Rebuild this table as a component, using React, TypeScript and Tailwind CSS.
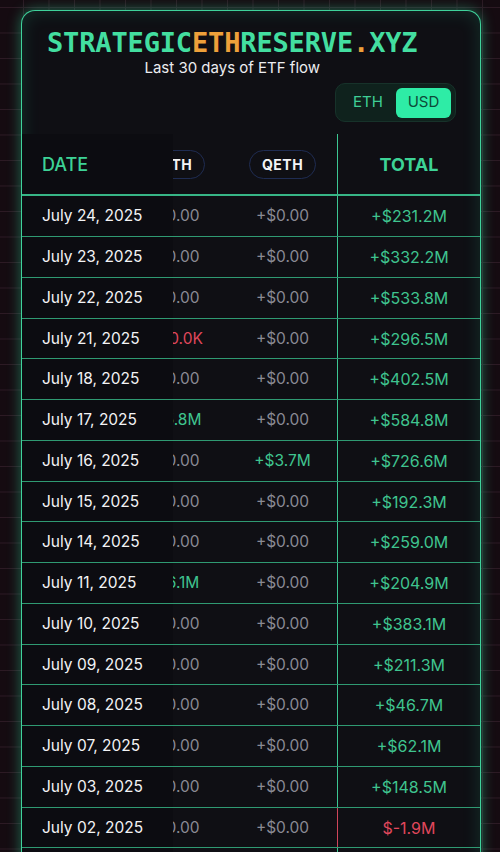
import React from "react";

type Tone = "g" | "r" | "n";
type Row = { date: string; c2: string; c2t: Tone; c3: string; c3t: Tone; total: string; tt: "g" | "r" };

const rows: Row[] = [
  { date: "July 24, 2025", c2: "+$0.00", c2t: "n", c3: "+$0.00", c3t: "n", total: "+$231.2M", tt: "g" },
  { date: "July 23, 2025", c2: "+$0.00", c2t: "n", c3: "+$0.00", c3t: "n", total: "+$332.2M", tt: "g" },
  { date: "July 22, 2025", c2: "+$0.00", c2t: "n", c3: "+$0.00", c3t: "n", total: "+$533.8M", tt: "g" },
  { date: "July 21, 2025", c2: "$-20.0K", c2t: "r", c3: "+$0.00", c3t: "n", total: "+$296.5M", tt: "g" },
  { date: "July 18, 2025", c2: "+$0.00", c2t: "n", c3: "+$0.00", c3t: "n", total: "+$402.5M", tt: "g" },
  { date: "July 17, 2025", c2: "+$5.8M", c2t: "g", c3: "+$0.00", c3t: "n", total: "+$584.8M", tt: "g" },
  { date: "July 16, 2025", c2: "+$0.00", c2t: "n", c3: "+$3.7M", c3t: "g", total: "+$726.6M", tt: "g" },
  { date: "July 15, 2025", c2: "+$0.00", c2t: "n", c3: "+$0.00", c3t: "n", total: "+$192.3M", tt: "g" },
  { date: "July 14, 2025", c2: "+$0.00", c2t: "n", c3: "+$0.00", c3t: "n", total: "+$259.0M", tt: "g" },
  { date: "July 11, 2025", c2: "+$6.1M", c2t: "g", c3: "+$0.00", c3t: "n", total: "+$204.9M", tt: "g" },
  { date: "July 10, 2025", c2: "+$0.00", c2t: "n", c3: "+$0.00", c3t: "n", total: "+$383.1M", tt: "g" },
  { date: "July 09, 2025", c2: "+$0.00", c2t: "n", c3: "+$0.00", c3t: "n", total: "+$211.3M", tt: "g" },
  { date: "July 08, 2025", c2: "+$0.00", c2t: "n", c3: "+$0.00", c3t: "n", total: "+$46.7M", tt: "g" },
  { date: "July 07, 2025", c2: "+$0.00", c2t: "n", c3: "+$0.00", c3t: "n", total: "+$62.1M", tt: "g" },
  { date: "July 03, 2025", c2: "+$0.00", c2t: "n", c3: "+$0.00", c3t: "n", total: "+$148.5M", tt: "g" },
  { date: "July 02, 2025", c2: "+$0.00", c2t: "n", c3: "+$0.00", c3t: "n", total: "$-1.9M", tt: "r" },
  { date: "July 01, 2025", c2: "+$0.00", c2t: "n", c3: "+$0.00", c3t: "n", total: "+$102.4M", tt: "g" },
];

const tone = (t: Tone) =>
  t === "g" ? "text-[#3fc48f]" : t === "r" ? "text-[#e0475c]" : "text-[#8a8a94]";

export default function App() {
  return (
    <div
      className="h-screen w-full overflow-hidden bg-[#150b11] [background-image:linear-gradient(to_right,#2c1a24_1px,transparent_1px),linear-gradient(to_bottom,#2c1a24_1px,transparent_1px)] [background-size:25.5px_25.5px] [background-position:23px_7px]"
      style={{ fontFamily: "Inter, 'Noto Sans', sans-serif" }}
    >
      <div className="ml-[21px] mt-[10px] w-[460px] rounded-t-[14px] border border-b-0 border-[#3fd29b] bg-[#0f0f14] shadow-[0_0_14px_rgba(46,232,165,0.45),inset_0_0_18px_rgba(46,232,165,0.16)]">
        {/* header */}
        <div className="pl-[25px] pt-[17px]">
          <div className="inline-flex flex-col items-center">
            <div
              className="text-[27px] leading-[30px] font-bold tracking-[-0.15px] text-[#43dea0]"
              style={{ fontFamily: "'DejaVu Sans Mono', monospace" }}
            >
              STRATEGIC<span className="text-[#eea03a]">ETH</span>RESERVE<span className="text-[#eea03a]">.</span>XYZ
            </div>
            <div className="text-[15px] leading-[20px] text-[#ececf0]">Last 30 days of ETF flow</div>
          </div>
        </div>
        <div className="mt-[5px] flex justify-end pr-[24px]">
          <div className="flex h-[39px] w-[121px] items-center rounded-[10px] border border-[#17322a] bg-[#0f221d] pl-[4px] pr-[4px]">
            <div className="flex h-[30px] w-[58px] items-center justify-center text-[15px] text-[#3fcf96]">ETH</div>
            <div className="flex h-[30px] w-[57px] items-center justify-center rounded-[6px] bg-[#2eeca6] text-[15px] text-[#0d4a39]">USD</div>
          </div>
        </div>

        {/* table */}
        <div className="mt-[12px]">
          {/* header row */}
          <div className="flex h-[62px] flex-col">
            <div className="flex flex-1">
              <div className="flex w-[151px] items-center bg-[#0c0c11] pl-[20px] text-[18px] font-medium text-[#3dd396]">DATE</div>
              <div className="flex w-[55px] items-center overflow-hidden">
                <div className="-ml-[55px] flex w-[110px] shrink-0 justify-center">
                  <span className="rounded-full border-[1.5px] border-[#1f2c52] px-[12px] py-[3px] text-[14px] font-bold tracking-[0.5px] text-[#f4f4f6]">FETH</span>
                </div>
              </div>
              <div className="flex w-[109px] items-center justify-center">
                <span className="rounded-full border-[1.5px] border-[#1f2c52] px-[12px] py-[3px] text-[14px] font-bold tracking-[0.5px] text-[#f4f4f6]">QETH</span>
              </div>
              <div className="w-px bg-[#3cc692]" />
              <div className="flex w-[142px] items-center justify-center text-[18px] font-bold text-[#3dd396]">TOTAL</div>
            </div>
            <div className="h-[2px] bg-[#37b586]" />
          </div>
          {rows.map((r, i) => (
            <div key={r.date} className={`flex flex-col ${i % 4 === 3 ? "h-[40px]" : "h-[41px]"}`}>
              <div className="flex flex-1 text-[15.5px]">
                <div className="flex w-[151px] items-center bg-[#0c0c11] pl-[20px] text-[#f3f3f5]">{r.date}</div>
                <div className="flex w-[55px] items-center overflow-hidden">
                  <div className={`-ml-[55px] flex w-[110px] shrink-0 justify-center whitespace-nowrap ${tone(r.c2t)}`}>{r.c2}</div>
                </div>
                <div className={`flex w-[109px] items-center justify-center ${tone(r.c3t)}`}>{r.c3}</div>
                <div className={`w-px ${r.tt === "r" ? "bg-[#d0455a]" : "bg-[#3cc692]"}`} />
                <div
                  className={`flex w-[142px] items-center justify-center text-[16px] ${
                    r.tt === "r" ? "text-[#e0475c]" : "text-[#3fc48f]"
                  }`}
                >
                  {r.total}
                </div>
              </div>
              <div className="h-px shrink-0 bg-[#2f9a72]" />
            </div>
          ))}
        </div>
      </div>
    </div>
  );
}
